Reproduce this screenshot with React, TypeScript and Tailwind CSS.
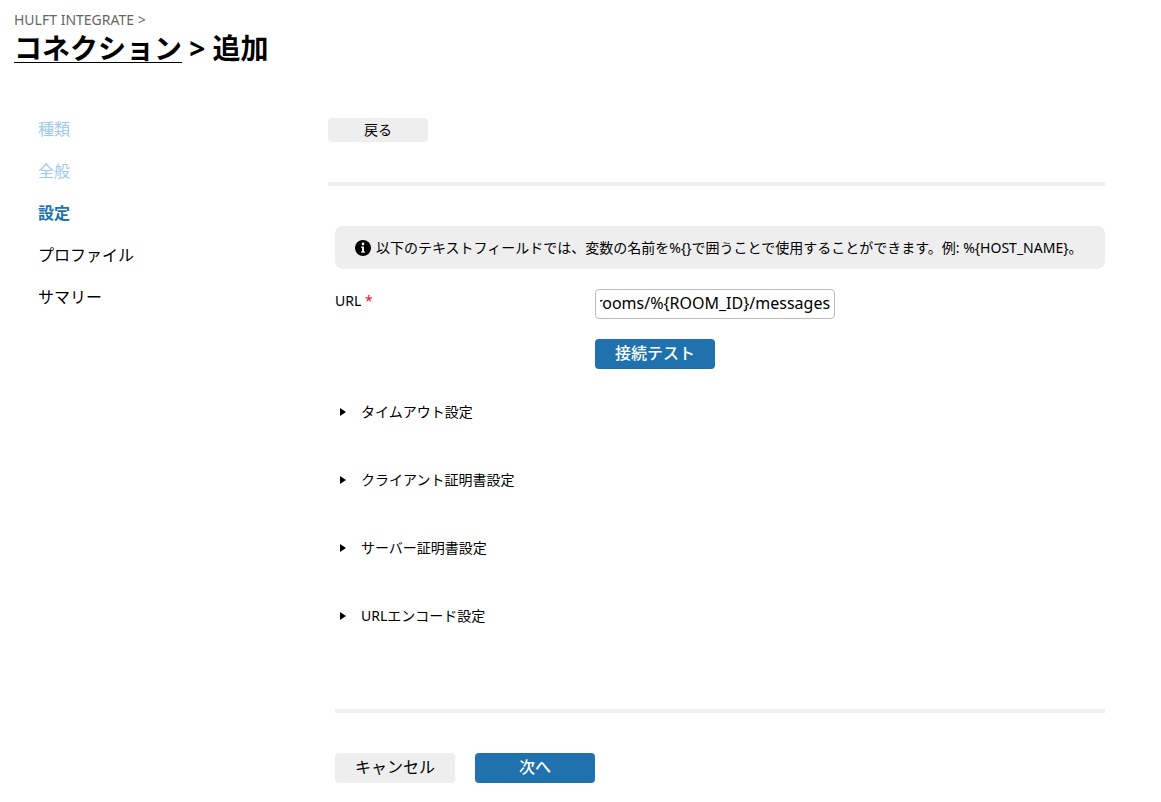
import { useEffect, useRef, useState } from "react";

type StepType = {
  label: string;
  status: "done" | "current" | "next";
};

const steps: StepType[] = [
  { label: "種類", status: "done" },
  { label: "全般", status: "done" },
  { label: "設定", status: "current" },
  { label: "プロファイル", status: "next" },
  { label: "サマリー", status: "next" },
];

const sections = [
  "タイムアウト設定",
  "クライアント証明書設定",
  "サーバー証明書設定",
  "URLエンコード設定",
];

const stepClasses = {
  done: "text-[#9cc9ec]",
  current: "text-[#2072af] font-bold",
  next: "text-black",
};

const InfoIcon = () => {
  return (
    <svg className="size-4 shrink-0" viewBox="0 0 16 16" aria-hidden="true">
      <circle cx="8" cy="8" r="8" fill="#000" />
      <circle cx="8" cy="4" r="1.4" fill="#eee" />
      <path d="M6 6.5h3v5h1v1.2H6v-1.2h1V7.7H6z" fill="#eee" />
    </svg>
  );
};

const Steps = () => {
  return (
    <nav className="w-[290px] shrink-0">
      <ol>
        {steps.map((step) => (
          <li
            key={step.label}
            className={`flex items-center h-[42px] text-base ${
              stepClasses[step.status]
            }`}
          >
            {step.label}
          </li>
        ))}
      </ol>
    </nav>
  );
};

const Section = ({ title }: { title: string }) => {
  const [open, setOpen] = useState<boolean>(false);

  return (
    <button
      type="button"
      aria-expanded={open}
      onClick={() => setOpen(!open)}
      className="flex items-center gap-[15px] h-5 pl-[5px] text-left"
    >
      <svg
        className={`w-1.5 h-2 ${open ? "rotate-90" : ""}`}
        viewBox="0 0 6 8"
        aria-hidden="true"
      >
        <path d="M0 0L6 4L0 8z" fill="#000" />
      </svg>
      {title}
    </button>
  );
};

const App = () => {
  const [url, setUrl] = useState<string>("/rooms/%{ROOM_ID}/messages");
  const urlRef = useRef<HTMLInputElement | null>(null);

  // 長いURLは末尾を表示する
  useEffect(() => {
    if (urlRef.current) {
      urlRef.current.scrollLeft = urlRef.current.scrollWidth;
    }
  }, []);

  return (
    <div className="min-h-screen bg-white text-black text-sm font-['Noto_Sans','Noto_Sans_CJK_JP',sans-serif]">
      <header className="px-3.5 pt-2.5">
        <p className="text-[#666666] leading-5">HULFT INTEGRATE &gt;</p>
        <h1 className="text-[28px] leading-9 font-bold">
          <a
            href="#connections"
            className="inline-block h-[33px] leading-9 border-b border-black"
          >
            コネクション
          </a>{" "}
          &gt; 追加
        </h1>
      </header>

      <div className="flex pt-[42px] pl-[38px] pr-14">
        <Steps />
        <main className="flex-1 min-w-0 pt-2.5">
          <button
            type="button"
            className="block w-[100px] h-6 rounded bg-[#eeeeee] leading-6"
          >
            戻る
          </button>
          <hr className="mt-10 border-0 h-1 bg-[#eeeeee]" />

          <form className="pl-[7px]" onSubmit={(e) => e.preventDefault()}>
            <div className="flex items-center gap-[5px] mt-10 px-5 min-h-[43px] rounded-lg bg-[#eeeeee]">
              <InfoIcon />
              <p>
                以下のテキストフィールドでは、変数の名前を%&#123;&#125;で囲うことで使用することができます。例:
                %&#123;HOST_NAME&#125;。
              </p>
            </div>

            <div className="flex mt-5">
              <label htmlFor="url" className="w-[260px] shrink-0 leading-6">
                URL <span className="text-[#d0202b]">*</span>
              </label>
              <div className="flex flex-col items-start gap-5">
                <input
                  id="url"
                  ref={urlRef}
                  type="text"
                  value={url}
                  onChange={(e) => setUrl(e.target.value)}
                  className="w-60 h-[30px] px-1 pb-0.5 text-base rounded border border-[#bbbbbb] bg-white"
                />
                <button
                  type="button"
                  className="w-[120px] h-[30px] pb-0.5 rounded bg-[#2072af] text-white text-base font-medium"
                >
                  接続テスト
                </button>
              </div>
            </div>

            <div className="flex flex-col items-start gap-12 mt-[33px]">
              {sections.map((title) => (
                <Section key={title} title={title} />
              ))}
            </div>

            <hr className="mt-[83px] border-0 h-1 bg-[#eeeeee]" />
            <div className="flex gap-5 mt-10 text-base">
              <button
                type="button"
                className="w-[120px] h-[30px] pb-0.5 rounded bg-[#eeeeee]"
              >
                キャンセル
              </button>
              <button
                type="submit"
                className="w-[120px] h-[30px] pb-0.5 rounded bg-[#2072af] text-white font-medium"
              >
                次へ
              </button>
            </div>
          </form>
        </main>
      </div>
    </div>
  );
};

export default App;
